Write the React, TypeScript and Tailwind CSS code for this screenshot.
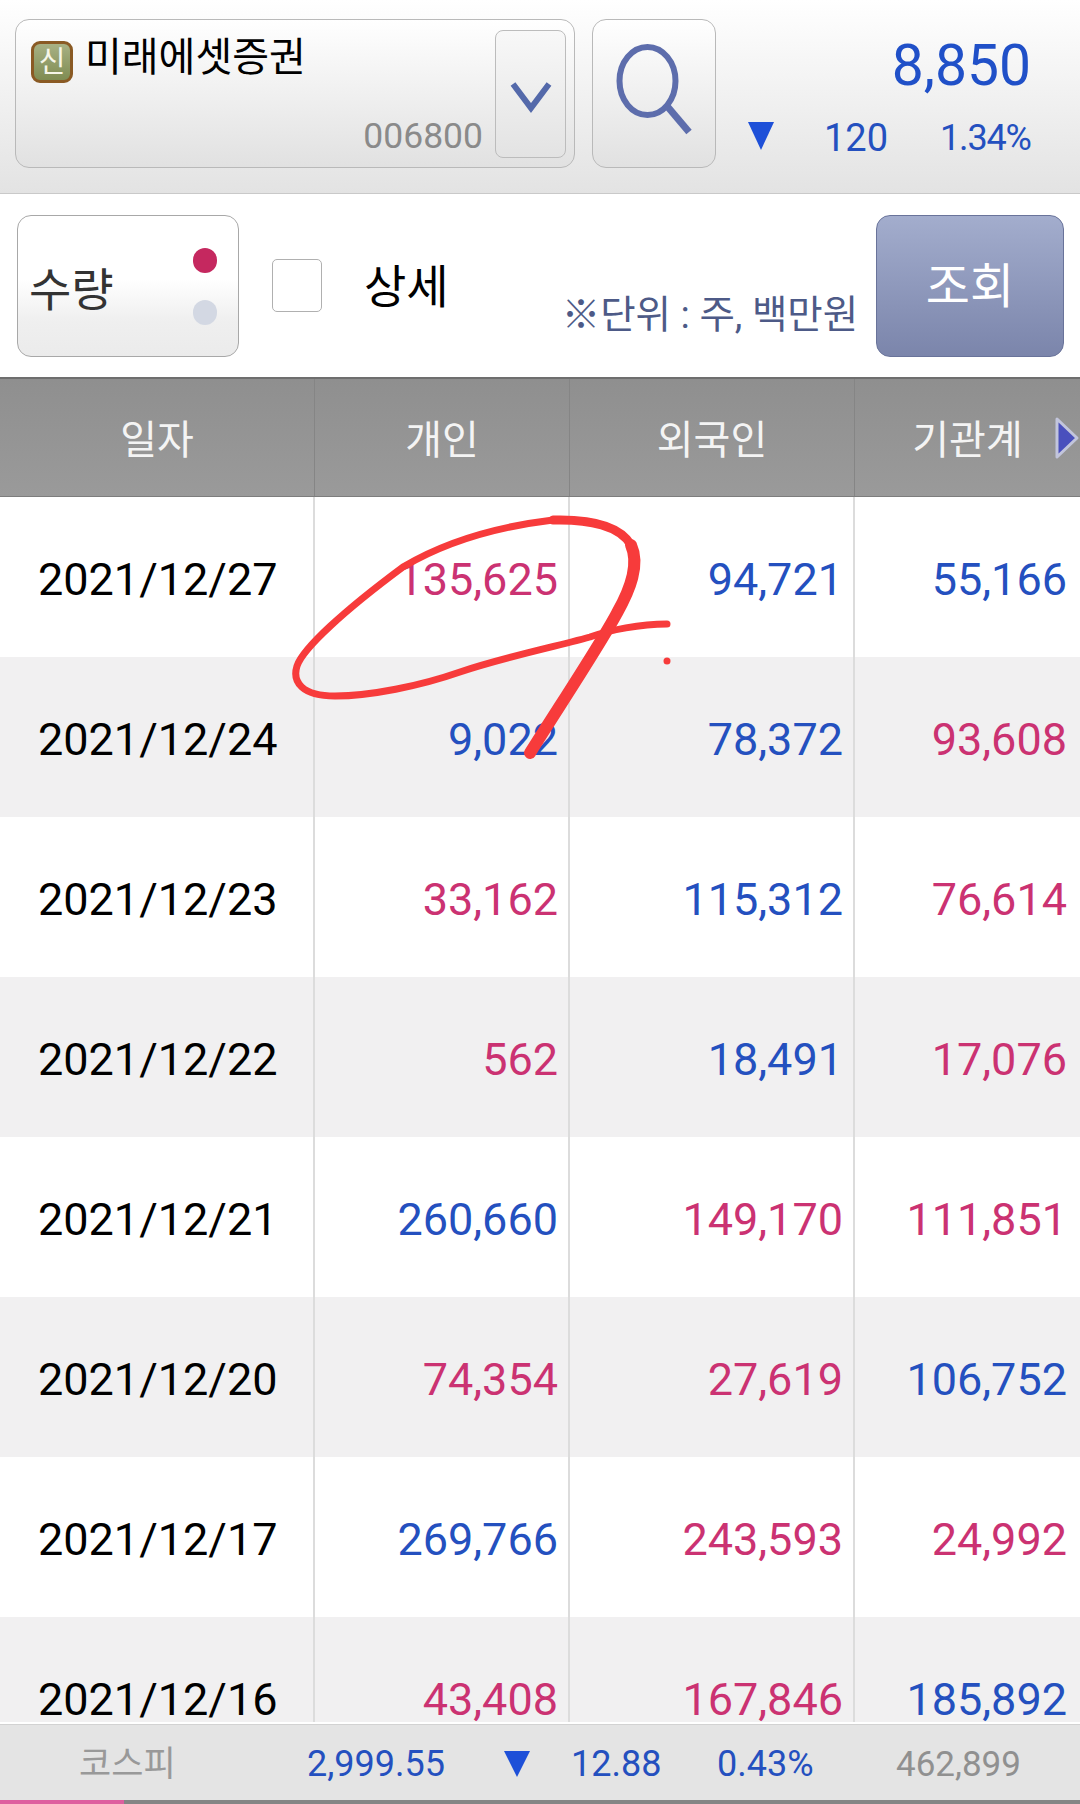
const P = "text-[#cb3272]";
const B = "text-[#2450bf]";
type Cell = [string, string];
const rows: { date: string; cells: Cell[]; shade: boolean }[] = [
  { date: "2021/12/27", shade: false, cells: [["135,625", P], ["94,721", B], ["55,166", B]] },
  { date: "2021/12/24", shade: true, cells: [["9,022", B], ["78,372", B], ["93,608", P]] },
  { date: "2021/12/23", shade: false, cells: [["33,162", P], ["115,312", B], ["76,614", P]] },
  { date: "2021/12/22", shade: true, cells: [["562", P], ["18,491", B], ["17,076", P]] },
  { date: "2021/12/21", shade: false, cells: [["260,660", B], ["149,170", P], ["111,851", P]] },
  { date: "2021/12/20", shade: true, cells: [["74,354", P], ["27,619", P], ["106,752", B]] },
  { date: "2021/12/17", shade: false, cells: [["269,766", B], ["243,593", P], ["24,992", P]] },
  { date: "2021/12/16", shade: true, cells: [["43,408", P], ["167,846", P], ["185,892", B]] },
];

export default function App() {
  return (
    <div className="relative flex h-[1804px] w-[1080px] flex-col overflow-hidden bg-white font-['Roboto','Noto_Sans_CJK_KR',sans-serif]">
      {/* top bar */}
      <div className="flex h-[194px] shrink-0 gap-[17px] border-b border-[#c9c9c9] bg-gradient-to-b from-white to-[#e3e3e3] pl-[15px] pt-[19px]">
        <div className="relative flex h-[149px] w-[560px] shrink-0 rounded-[14px] border border-[#b9b9b9] bg-gradient-to-b from-white to-[#e1e1e1]">
          <div className="ml-[15px] mt-[21px] flex h-[42px] w-[42px] items-center justify-center rounded-[9px] border-[3px] border-[#8a5a24] bg-gradient-to-b from-[#a8b184] to-[#7f8c52] text-[29px] leading-none text-[#f6f6e8]">
            신
          </div>
          <div className="ml-[12px] mt-[10px] text-[40px] leading-[56px] text-black">미래에셋증권</div>
          <div className="absolute right-[91px] top-[96px] text-[35.5px] leading-[40px] text-[#8a8a8a]">006800</div>
          <div className="absolute right-[8px] top-[10px] flex h-[128px] w-[71px] items-center justify-center rounded-[8px] border border-[#bcbcbc] bg-gradient-to-b from-[#f8f8f8] to-[#e3e3e3]">
            <svg width="44" height="34" viewBox="0 0 44 34" className="mt-[5px]" fill="none">
              <path d="M4 4 L22 28 L40 4" stroke="#5469aa" strokeWidth="6" />
            </svg>
          </div>
        </div>
        <div className="flex h-[149px] w-[124px] shrink-0 rounded-[14px] border border-[#b9b9b9] bg-gradient-to-b from-white to-[#e1e1e1]">
          <svg width="122" height="147" viewBox="0 0 122 147" fill="none">
            <ellipse cx="54.5" cy="61" rx="28" ry="34" stroke="#5d6dac" strokeWidth="6" />
            <path d="M74 86 L96 112" stroke="#5d6dac" strokeWidth="7" />
          </svg>
        </div>
        <div className="flex w-[298px] shrink-0 flex-col">
          <div className="mt-[15px] text-right text-[57px] leading-[64px] text-[#2050c8]">8,850</div>
          <div className="mt-[19px] flex items-center text-[38px] leading-[42px] text-[#2450bf]">
            <svg width="26" height="28" viewBox="0 0 26 28" className="ml-[15px] mt-[-4px] shrink-0">
              <path d="M0 0 H26 L13 28 Z" fill="#1e50d8" />
            </svg>
            <span className="ml-[50px]">120</span>
            <span className="ml-[52px] text-[36px] tracking-[-1.2px]">1.34%</span>
          </div>
        </div>
      </div>

      {/* controls */}
      <div className="flex h-[183px] shrink-0 bg-white pl-[17px] pr-[16px] pt-[21px]">
        <div className="relative h-[142px] w-[222px] shrink-0 rounded-[14px] border border-[#a8a8a8] bg-[linear-gradient(to_bottom,#ffffff_45%,#efefef_75%,#ebebeb)]">
          <span className="absolute left-[11px] top-[42px] text-[46px] leading-[64px] text-[#333]">수량</span>
          <span className="absolute left-[175px] top-[32px] h-[25px] w-[24px] rounded-full bg-[#c5285f]" />
          <span className="absolute left-[175px] top-[84px] h-[25px] w-[24px] rounded-full bg-[#d3d8e3]" />
        </div>
        <div className="ml-[33px] mt-[44px] h-[53px] w-[50px] shrink-0 rounded-[5px] border border-[#b0b0b0] bg-white" />
        <div className="ml-[42px] mt-[40px] text-[46px] leading-[64px] text-black">상세</div>
        <div className="ml-[113px] mt-[70px] whitespace-nowrap text-[38.5px] leading-[60px] text-[#4d5a87]">※단위 : 주, 백만원</div>
        <div className="ml-auto flex h-[142px] w-[188px] shrink-0 items-center justify-center rounded-[14px] border border-[#69739a] bg-gradient-to-b from-[#a3adcd] to-[#7b85ab] pt-[2px] text-[48px] text-white">
          조회
        </div>
      </div>

      {/* table header */}
      <div className="relative grid h-[120px] shrink-0 grid-cols-[315px_255px_285px_225px] border-t-2 border-b border-t-[#6e6e6e] border-b-[#7d7d7d] bg-gradient-to-b from-[#8f8f8f] to-[#9a9a9a] text-[40px] text-[#f4f4f4]">
        <div className="flex items-center justify-center border-r border-[#858585] pt-[6px]">일자</div>
        <div className="flex items-center justify-center border-r border-[#858585] pt-[6px]">개인</div>
        <div className="flex items-center justify-center border-r border-[#858585] pt-[6px]">외국인</div>
        <div className="flex items-center justify-center pt-[6px]">기관계</div>
        <svg width="26" height="44" viewBox="0 0 26 44" className="absolute left-[1054px] top-[37px]">
          <path d="M3 3 L23 22 L3 41 Z" fill="#4a50bd" stroke="#c2c5dc" strokeWidth="3" strokeLinejoin="round" />
        </svg>
      </div>

      {/* table body */}
      <div className="h-[1225px] shrink-0 overflow-hidden text-[45px]">
        {rows.map((r) => (
          <div
            key={r.date}
            className={`grid h-[160px] grid-cols-[315px_255px_285px_225px] leading-[166px] ${r.shade ? "bg-[#f1f0f1]" : "bg-white"}`}
          >
            <div className="border-r-2 border-[#dcdcdc] pl-[38px] text-black">{r.date}</div>
            {r.cells.map(([v, c], i) => (
              <div
                key={i}
                className={`text-right ${c} ${i < 2 ? "border-r-2 border-[#dcdcdc] pr-[10px]" : "pr-[13px]"}`}
              >
                {v}
              </div>
            ))}
          </div>
        ))}
      </div>

      {/* index footer */}
      <div className="mt-[2px] flex h-[76px] shrink-0 items-center border-t border-[#d2d2d2] bg-[#e4e4e4] pt-[3px] text-[36px] leading-none">
        <span className="ml-[79px] w-[228px] text-[35px] text-[#999]">코스피</span>
        <span className="w-[197px] text-[#2450bf]">2,999.55</span>
        <svg width="26" height="26" viewBox="0 0 26 26" className="shrink-0">
          <path d="M0 0 H26 L13 26 Z" fill="#1e50d8" />
        </svg>
        <span className="ml-[41px] w-[146px] text-[#2450bf]">12.88</span>
        <span className="w-[179px] text-[#2450bf]">0.43%</span>
        <span className="text-[35px] text-[#909090]">462,899</span>
      </div>

      {/* progress */}
      <div className="h-[4px] shrink-0 bg-[#858585]">
        <div className="h-full w-[124px] bg-[#de5f9f]" />
      </div>

      {/* red pen scribble over the table */}
      <svg width="1080" height="1804" viewBox="0 0 1080 1804" className="pointer-events-none absolute left-0 top-0" fill="none" strokeLinecap="round" strokeLinejoin="round">
        <path d="M667 624 C640 624 610 630 590 637 C550 648 505 657 460 672 C420 686 370 696 335 696 C302 696 292 682 297 666 C303 648 345 610 403 567 C445 542 495 527 553 520" stroke="#f73b3b" strokeWidth="7" />
        <path d="M553 520 C590 519 620 526 631 545" stroke="#f73b3b" strokeWidth="9" />
        <path d="M631 545 C640 565 630 590 617 613 C600 645 560 705 530 753" stroke="#f73b3b" strokeWidth="12" />
        <circle cx="667" cy="661" r="3.5" fill="#f73b3b" />
      </svg>
    </div>
  );
}
